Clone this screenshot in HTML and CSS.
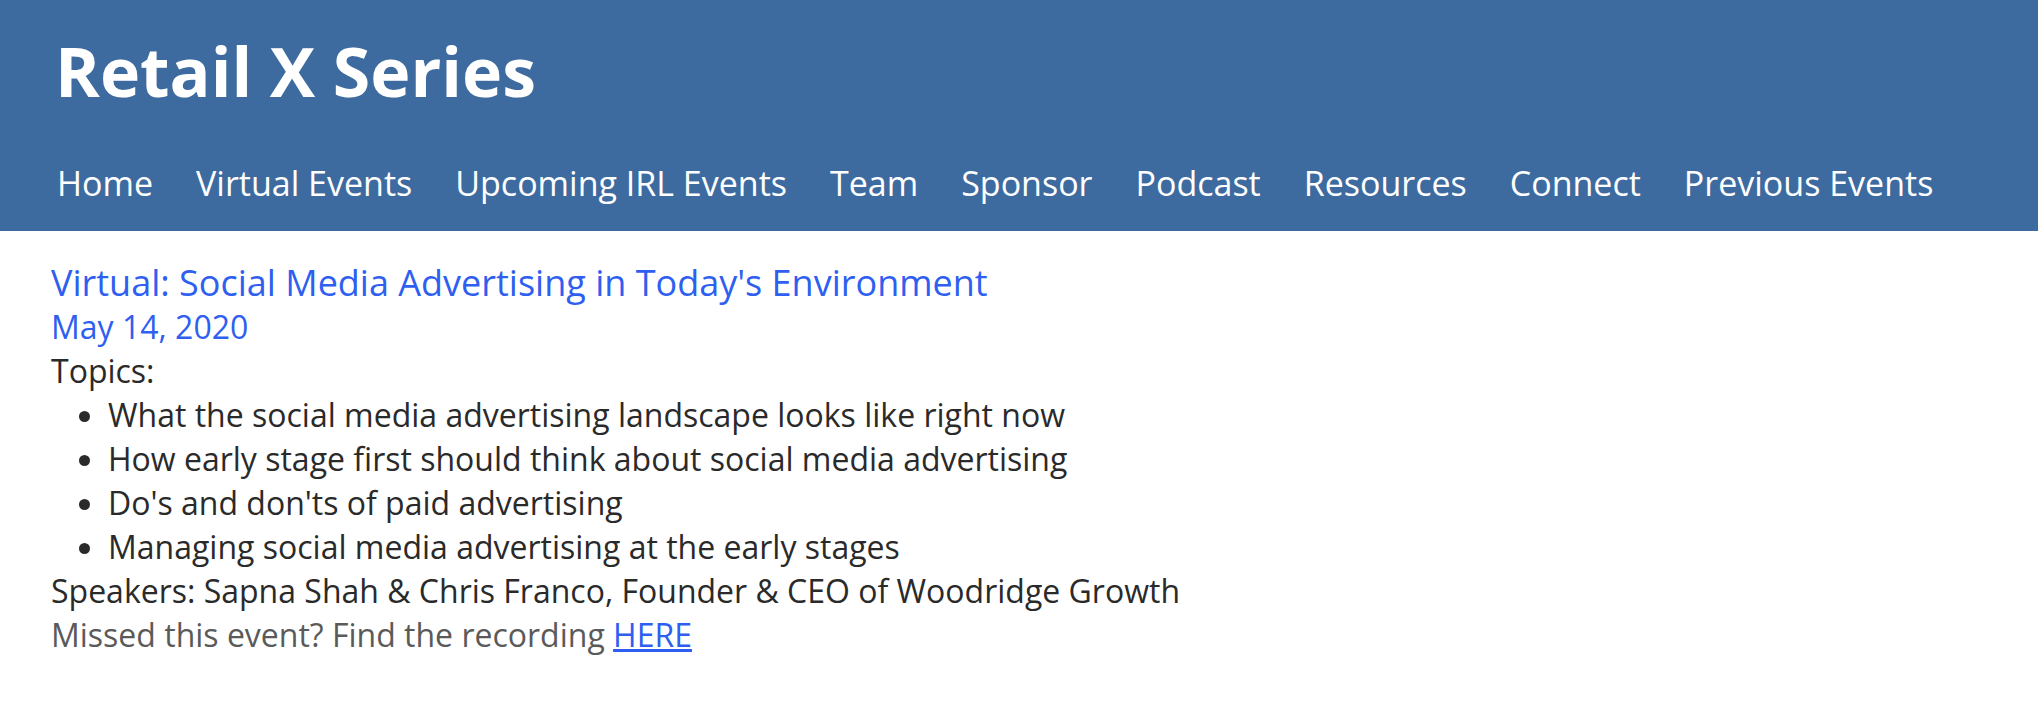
FILE: index.html
```html
<!DOCTYPE html>
<html lang="en">
<head>
<meta charset="utf-8">
<title>Retail X Series</title>
<link rel="stylesheet" href="styles.css">
</head>
<body>
<header class="site-header">
  <h1 class="site-title">Retail X Series</h1>
  <nav class="site-nav">
    <a class="nav-link" href="#">Home</a>
    <a class="nav-link" href="#">Virtual Events</a>
    <a class="nav-link" href="#">Upcoming IRL Events</a>
    <a class="nav-link" href="#">Team</a>
    <a class="nav-link" href="#">Sponsor</a>
    <a class="nav-link" href="#">Podcast</a>
    <a class="nav-link" href="#">Resources</a>
    <a class="nav-link" href="#">Connect</a>
    <a class="nav-link" href="#">Previous Events</a>
  </nav>
</header>
<main class="content">
  <div class="event-title">Virtual: Social Media Advertising in Today's Environment</div>
  <div class="event-date">May 14, 2020</div>
  <div class="event-text">Topics:</div>
  <ul class="topics">
    <li>What the social media advertising landscape looks like right now</li>
    <li>How early stage first should think about social media advertising</li>
    <li>Do's and don'ts of paid advertising</li>
    <li>Managing social media advertising at the early stages</li>
  </ul>
  <div class="event-text">Speakers: Sapna Shah &amp; Chris Franco, Founder &amp; CEO of Woodridge Growth</div>
  <div class="event-note">Missed this event? Find the recording <a class="here-link" href="#">HERE</a></div>
</main>
</body>
</html>
```

FILE: styles.css
```css
html, body {
  margin: 0;
  padding: 0;
  background: #ffffff;
}
body {
  font-family: "Open Sans", "Liberation Sans", sans-serif;
  font-size: 32px;
  line-height: 44px;
  color: #2a2a2a;
}
.site-header {
  background: #3d6b9f;
  padding: 23px 0 26px 55px;
}
.site-title {
  margin: 0;
  font-size: 68px;
  font-weight: 700;
  line-height: 95px;
  color: #ffffff;
}
.site-nav {
  display: flex;
  gap: 43px;
  margin-top: 43px;
  padding-left: 2px;
  font-size: 34px;
}
.nav-link {
  color: #ffffff;
  text-decoration: none;
}
.content {
  padding: 30px 0 0 51px;
}
.event-title {
  font-size: 36px;
  line-height: 44px;
  color: #2f5ff0;
}
.event-date {
  color: #2f5ff0;
}
.topics {
  margin: 0;
  padding-left: 57px;
  list-style: disc;
}
.event-note {
  color: #5a5a5a;
}
.here-link {
  color: #2f5ff0;
  text-decoration: underline;
}
```
